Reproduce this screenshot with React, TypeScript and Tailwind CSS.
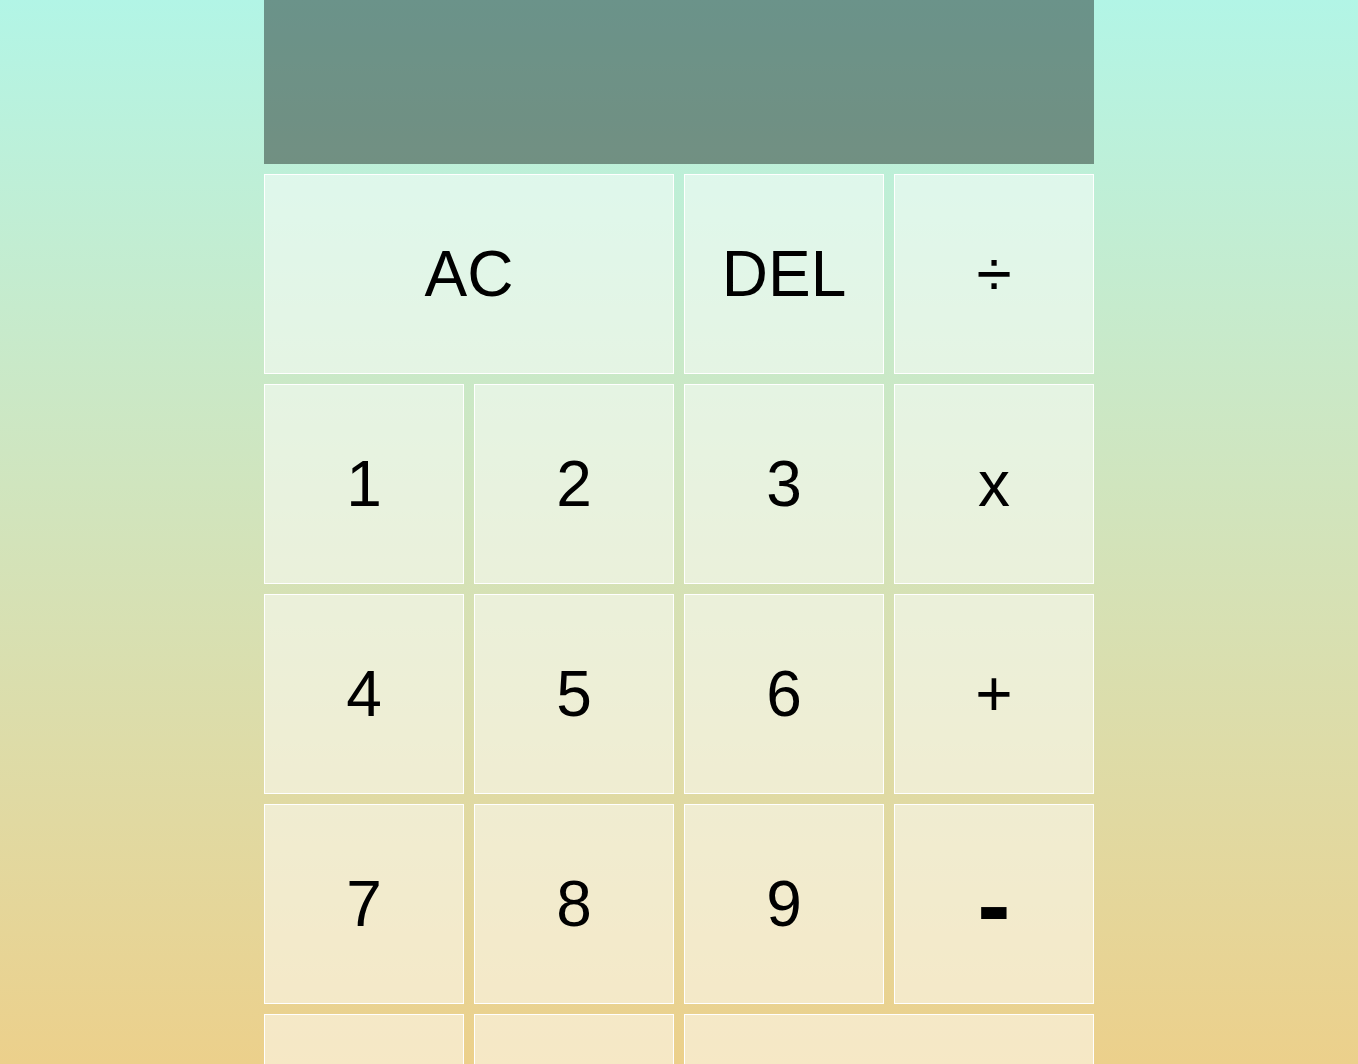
const rows: { label: string; wide?: boolean; className?: string }[][] = [
  [{ label: "AC", wide: true }, { label: "DEL" }, { label: "÷" }],
  [{ label: "1" }, { label: "2" }, { label: "3" }, { label: "x" }],
  [{ label: "4" }, { label: "5" }, { label: "6" }, { label: "+" }],
  [{ label: "7" }, { label: "8" }, { label: "9" }, { label: "-", className: "font-bold text-[100px]" }],
  [{ label: "." }, { label: "0" }, { label: "=", wide: true }],
];

export default function App() {
  return (
    <div
      className="min-h-screen bg-fixed bg-linear-to-b from-[#b2f5e6] to-[#ecd08b]"
      style={{ fontFamily: '"Liberation Sans", Arial, sans-serif' }}
    >
      <div className="grid grid-cols-[repeat(4,200px)] auto-rows-[200px] grid-rows-[164px] gap-[10px] justify-center">
        <div className="col-span-4 bg-black/40 flex flex-col items-end justify-around px-4 text-white break-all"></div>
        {rows.flat().map((b, i) => (
          <button
            key={i}
            className={
              "border border-white bg-white/50 text-black text-[64px] leading-none cursor-pointer flex items-center justify-center " +
              (b.wide ? "col-span-2 " : "") +
              (b.className ?? "")
            }
          >
            {b.label}
          </button>
        ))}
      </div>
    </div>
  );
}
